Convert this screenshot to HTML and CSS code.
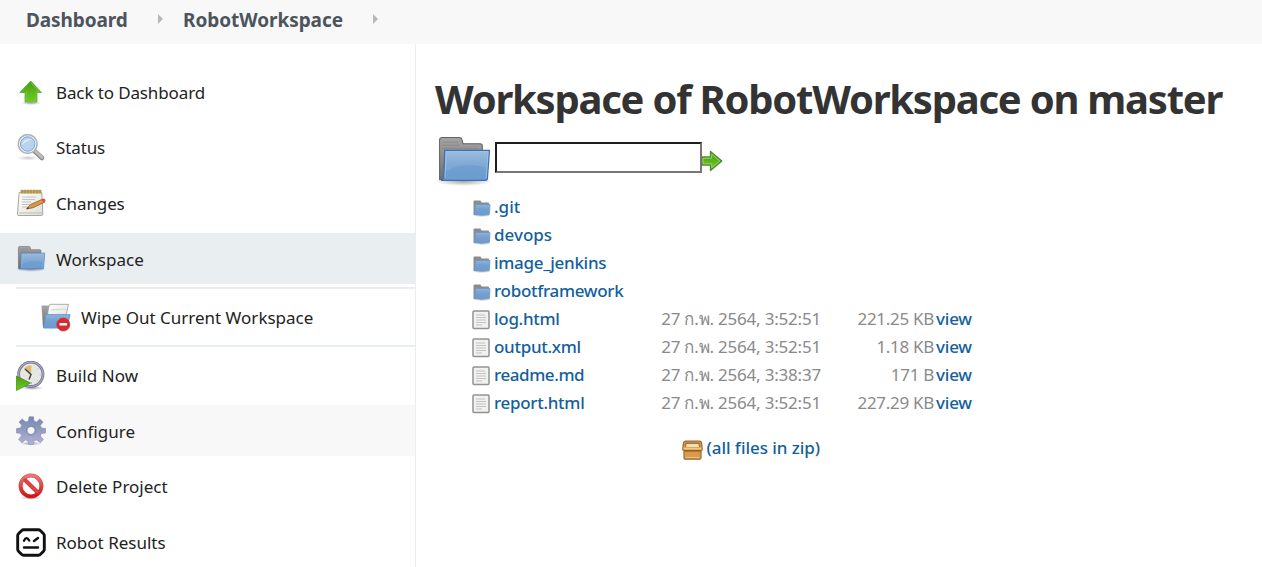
FILE: index.html
```html
<!DOCTYPE html>
<html lang="en">
<head>
<meta charset="utf-8">
<title>Workspace of RobotWorkspace on master</title>
<link rel="stylesheet" href="styles.css">
</head>
<body>
<svg class="defs" width="0" height="0" aria-hidden="true">
  <defs>
    <linearGradient id="blue" x1="0" y1="0" x2="0" y2="1"><stop offset="0" stop-color="#8fb4dc"/><stop offset=".5" stop-color="#729fcf"/><stop offset="1" stop-color="#6b9bd2"/></linearGradient>
    <linearGradient id="grey" x1="0" y1="0" x2="0" y2="1"><stop offset="0" stop-color="#a5a5a5"/><stop offset="1" stop-color="#6e6e6e"/></linearGradient>
    <linearGradient id="green" x1="0" y1="0" x2="0" y2="1"><stop offset="0" stop-color="#4a9a17"/><stop offset="1" stop-color="#6fce1c"/></linearGradient>
    <linearGradient id="paper" x1="0" y1="0" x2="1" y2="1"><stop offset="0" stop-color="#fff"/><stop offset="1" stop-color="#deded9"/></linearGradient>
    <linearGradient id="red" x1="0" y1="0" x2="0" y2="1"><stop offset="0" stop-color="#e87878"/><stop offset="1" stop-color="#cc1515"/></linearGradient>
    <linearGradient id="gear" x1="0" y1="0" x2="0" y2="1"><stop offset="0" stop-color="#7488ae"/><stop offset="1" stop-color="#b3b2d6"/></linearGradient>
    <radialGradient id="shade"><stop offset="0" stop-color="#000" stop-opacity=".35"/><stop offset="1" stop-color="#000" stop-opacity="0"/></radialGradient>
    <symbol id="folder" viewBox="0 0 56 50">
      <ellipse cx="28" cy="45.500" rx="28" ry="4.500" fill="url(#shade)"/>
      <path d="M4.500 44V5q0-2.500 2.500-2.500h17q2 0 2.500 2l1 4h17q2 0 2 2V42z" fill="url(#grey)" stroke="#626262"/>
      <path d="M7 7h16M7 10h17M7 13h36" stroke="#858585" stroke-width=".8"/>
      <path d="M9.500 15h44L51.500 43q-.2 1.500-2 1.500H6q2.500-1 2.700-3z" fill="url(#blue)" stroke="#3c70b2" stroke-width="1.200"/>
      <path d="M11 16.300h41L50.500 32Q28 26 9.500 36z" fill="#fff" opacity=".1"/>
      <path d="M9.800 42l1.300-25.700h41L50.200 42.500" fill="none" stroke="#a5c5ea" stroke-width=".8"/>
    </symbol>
    <symbol id="mini-folder" viewBox="0 0 20 18">
      <ellipse cx="10" cy="16.500" rx="9" ry="1.500" fill="url(#shade)"/>
      <path d="M1.500 16V2.500q0-1 1-1H8.500l1 2H16q1 0 1 1V15z" fill="#8c8c8c"/>
      <path d="M3.500 5.500H18L17.500 15q0 .8-1 .8H2.500z" fill="url(#blue)" stroke="#6594cb" stroke-width=".7"/>
    </symbol>
    <symbol id="file" viewBox="0 0 18 20">
      <rect x="1" y="1" width="16" height="17.500" rx="1" fill="#f1f1f0" stroke="#929292" stroke-width="1.500"/>
      <path d="M4 5h9M4 7.500h10M4 10h10M4 12.500h10M4 15h6" stroke="#c2c2c2"/>
    </symbol>
  </defs>
</svg>
<header class="breadcrumbs">
  <a class="crumb crumb-home">Dashboard</a><i class="sep"></i><a class="crumb crumb-job">RobotWorkspace</a><i class="sep sep-last"></i>
</header>
<div class="page">
  <nav class="side">
    <a class="task"><svg class="icon" viewBox="0 0 30 30"><ellipse cx="15" cy="25" rx="10" ry="2" fill="url(#shade)"/><path d="M14.700 3L25.500 14.500H21v9.500H9v-9.500H3.800z" fill="url(#green)" stroke="#57a834" stroke-width=".8"/><path d="M14.700 4.500l8.500 9.200H20V23h-9.800v-9.300" fill="none" stroke="#7fcb50" stroke-width=".7"/></svg><span class="t-tight">Back to Dashboard</span></a>
    <a class="task"><svg class="icon" viewBox="0 0 30 30"><ellipse cx="12" cy="25" rx="11" ry="2.500" fill="url(#shade)" opacity=".6"/><path d="M19 18.500l7 6.500" stroke="#8a8a8a" stroke-width="4.500" stroke-linecap="round"/><path d="M19 18l7 6.500" stroke="#bcbcbc" stroke-width="2.800" stroke-linecap="round"/><circle cx="11.700" cy="11" r="9.300" fill="#b9d2ef" stroke="#b0b3b6" stroke-width="1.800"/><circle cx="11.700" cy="11" r="8" fill="none" stroke="#f5f7fa" stroke-width="1.200"/><circle cx="11.700" cy="11" r="7.200" fill="none" stroke="#7fa8d6"/><path d="M6 12q1-7 10-6-5 2-10 6z" fill="#fff" opacity=".5"/></svg><span class="t-tight">Status</span></a>
    <a class="task changes"><svg class="icon" viewBox="0 0 30 30"><path d="M3.200 3.500h22.600l1.100 21.500q0 1.500-1.500 1.500H3.100Q1.500 26.500 1.500 25z" fill="url(#paper)" stroke="#a7a79e"/><path d="M4.500 1h21V4.500h-21z" fill="#bda65a"/><path d="M6 .5v4M9 .5v4M12 .5v4M15 .5v4M18 .5v4M21 .5v4M24 .5v4" stroke="#a08f45"/><path d="M6 8h14M6 10.500h13M6 13h9M6 15.500h8M6 18h6" stroke="#c4c4c4"/><path d="M3 24h23" stroke="#bcbcb7"/><path d="M10.500 20l4-4.500L27 10l2 3-12 5.700z" fill="#d99a45" stroke="#955c22" stroke-width=".8"/><path d="M25.500 10.500l2.200-1q1.600 0 2 2l-2.500 1.800z" fill="#d9534b"/><path d="M10.500 20l1.700-2 1.100 1.200z" fill="#333"/></svg><span class="t-tight">Changes</span></a>
    <a class="task active"><svg class="folder-icon"><use href="#folder"/></svg><span class="t-low">Workspace</span></a>
    <div class="subtasks">
      <a class="subtask"><svg class="icon" viewBox="0 0 30 30"><path d="M.5 3.500q0-1 1-1H8l2 2v20H2z" fill="url(#grey)"/><path d="M5 23L7.500 4.500 9 1.300h18.500L25 13H5z" fill="url(#paper)" stroke="#999" stroke-width=".8"/><path d="M10 7l15-1" stroke="#d2d2ce"/><path d="M5 11.700h24L26 25H2.500z" fill="url(#blue)" stroke="#6897cd"/><circle cx="22.300" cy="21.500" r="6.500" fill="#db2a2e" stroke="#c2353a" stroke-width=".8"/><path d="M18.500 21.300h7.600" stroke="#fff" stroke-width="2.400"/></svg><span>Wipe Out Current Workspace</span></a>
    </div>
    <a class="task build"><svg class="icon" viewBox="0 0 30 30"><ellipse cx="16" cy="27" rx="12" ry="2" fill="url(#shade)"/><circle cx="14.800" cy="13.300" r="12.200" fill="#e6e6e2" stroke="#757592" stroke-width="2.800"/><circle cx="14.800" cy="13.300" r="12.200" fill="none" stroke="#a9a9c6" stroke-width="1.200"/><path d="M15 13.500L8 7.500Q10.500 4.500 15.500 4.500z" fill="#dfbb68"/><path d="M9 8l6 5.500-2 5" fill="none" stroke="#444" stroke-width="1.500"/><path d="M23.500 14H25M15.500 21v2M22 7.500l-1 1M22 20l-1-1" stroke="#bbb"/><path d="M.5 15l14 7L.5 29.500z" fill="url(#green)" stroke="#46951f" stroke-width=".8"/></svg><span class="t-wide">Build Now</span></a>
    <a class="task hover"><svg class="icon" viewBox="0 0 30 30"><ellipse cx="15" cy="27.500" rx="11" ry="2" fill="url(#shade)"/><path fill="url(#gear)" fill-rule="evenodd" stroke="#8a92b8" stroke-width=".7" d="M12.500 5L13 .8h4.500L18 5l2.500 1 3.300-3 3.300 3-2.800 3.500 1.200 2.500 4 .5V17l-4.200.5-1 2.500 3 3.500-3 3.200-3.500-2.800-3 1.200-.7 3.400h-4.300l-.8-3.500-2.700-1.200L6 26.700 2.700 23.500l2.800-3.700-1-2.500L.5 17v-4.500l4-.5 1.200-2.800L3 6l3.200-3L9.700 6zM15 10.500a4 4 0 1 0 0 8 4 4 0 0 0 0-8z"/><circle cx="15" cy="14.500" r="4.500" fill="none" stroke="#7e86b2"/></svg><span class="t-low">Configure</span></a>
    <a class="task delete"><svg class="icon" viewBox="0 0 30 30"><ellipse cx="15" cy="25.800" rx="11" ry="2" fill="url(#shade)"/><circle cx="15" cy="14" r="10.400" fill="#fff" stroke="#cf4a4a" stroke-width="4"/><path d="M8 7l14 13.700" stroke="#c83232" stroke-width="4"/><circle cx="15" cy="14" r="10.400" fill="none" stroke="url(#red)" stroke-width="3"/><path d="M8 7l14 13.700" stroke="#dd4545" stroke-width="3"/></svg><span>Delete Project</span></a>
    <a class="task robot"><svg class="icon" viewBox="0 0 30 30" fill="none" stroke="#111"><path d="M7.500 1.700h15q1 0 2 1L27.300 5.500q1 1 1 2v14q0 1-1 2l-2.800 2.800q-1 1-2 1h-15q-1 0-2-1l-2.800-2.800q-1-1-1-2v-14q0-1 1-2l2.800-2.800q1-1 2-1z" stroke-width="2.900" stroke-linejoin="round"/><path d="M8 12.700q2.500-5 5.200-.2M18 13l4-3M8 19.500h14" stroke-width="2.400" stroke-linecap="round"/></svg><span>Robot Results</span></a>
  </nav>
  <main class="main">
    <h1>Workspace of RobotWorkspace on master</h1>
    <form class="path">
      <svg class="big-folder"><use href="#folder"/></svg>
      <input class="path-input" type="text" aria-label="Path">
      <svg class="go" viewBox="0 0 21 22"><path d="M0 7h8.500V1.500L19.800 11 8.500 20.500V15H0z" fill="#62b51e" stroke="#4b8a32" stroke-width="1.300" stroke-linejoin="round"/><path d="M1 8.200h8.700V4.200L17.800 11 9.700 17.800v-4H1z" fill="url(#green)" stroke="#9ad36e"/></svg>
    </form>
    <div class="files">
      <div class="row"><svg class="dir"><use href="#mini-folder"/></svg><a class="name n-short">.git</a></div>
      <div class="row"><svg class="dir"><use href="#mini-folder"/></svg><a class="name n-short">devops</a></div>
      <div class="row"><svg class="dir"><use href="#mini-folder"/></svg><a class="name">image_jenkins</a></div>
      <div class="row"><svg class="dir"><use href="#mini-folder"/></svg><a class="name">robotframework</a></div>
      <div class="row"><svg class="doc"><use href="#file"/></svg><a class="name">log.html</a><span class="date">27 ก.พ. 2564, 3:52:51</span><span class="size">221.25 KB</span><a class="view">view</a></div>
      <div class="row"><svg class="doc"><use href="#file"/></svg><a class="name">output.xml</a><span class="date">27 ก.พ. 2564, 3:52:51</span><span class="size">1.18 KB</span><a class="view">view</a></div>
      <div class="row"><svg class="doc"><use href="#file"/></svg><a class="name n-readme">readme.md</a><span class="date">27 ก.พ. 2564, 3:38:37</span><span class="size">171 B</span><a class="view">view</a></div>
      <div class="row"><svg class="doc"><use href="#file"/></svg><a class="name">report.html</a><span class="date">27 ก.พ. 2564, 3:52:51</span><span class="size">227.29 KB</span><a class="view">view</a></div>
    </div>
    <div class="zip">
      <svg class="box" viewBox="0 0 21 20"><path d="M3.500 1.200h14q1.500 0 2 1.500l.7 5.300v2H19v8q0 1.200-1.200 1.200H3.200Q2 19.200 2 18v-8H.800V8l.7-5.300q.5-1.500 2-1.500z" fill="#d99b4b" stroke="#9a6a30" stroke-width="1.200"/><path d="M3.500 2.500h14l1 5h-16z" fill="#a8743a"/><path d="M4.500 4h12l.5 3H4z" fill="#f2dfb5"/><path d="M1.500 7.500h18v2h-18z" fill="#f0c988"/><path d="M2 10.800h17" stroke="#8f5c24" stroke-width="1.500"/><path d="M3.500 17.500h14" stroke="#edc27c"/></svg>
      <a class="all">(all files in zip)</a>
    </div>
  </main>
</div>
</body>
</html>
```

FILE: styles.css
```css
* { box-sizing: border-box; }
body {
  margin: 0;
  height: 567px;
  overflow: hidden;
  background: #fff;
  color: #333;
  font: 500 17px/24px "Noto Sans", "Open Sans", sans-serif;
}
a { color: #135f9c; white-space: nowrap; }
svg { display: block; flex: none; }
.defs { position: absolute; }

.breadcrumbs {
  display: flex;
  height: 44px;
  padding: 8px 0 0 26px;
  background: #f8f8f8;
}
.crumb { color: #4d545d; font-weight: 700; font-size: 19px; }
.crumb-home { width: 132px; letter-spacing: -.1px; }
.crumb-job { width: 174px; letter-spacing: -.05px; }
.sep {
  width: 0;
  height: 10px;
  margin: 6px 20px 0 0;
  border: solid transparent;
  border-width: 5px 0 5px 5px;
  border-left-color: #b8b8b8;
}
.sep-last { margin-left: 16px; }

.page { display: flex; height: 523px; }
.side {
  flex: none;
  width: 416px;
  padding-top: 23px;
  border-right: 1px solid #eaeef0;
  font-weight: 400;
}
.task {
  display: flex;
  align-items: center;
  gap: 10px;
  height: 51px;
  margin-bottom: 4px;
  padding-left: 16px;
  color: #222;
}
.icon { width: 30px; height: 30px; }
.folder-icon { width: 30px; height: 27px; }
.t-tight { letter-spacing: -.12px; }
.t-wide { letter-spacing: .1px; }
.t-low { padding-top: 2px; }
.changes { margin-top: 5px; }
.active { margin-bottom: 3px; background: #e9eef1; }
.hover { margin-bottom: 5px; background: #f8f8f8; }
.delete { margin-bottom: 5px; }
.subtasks {
  height: 60px;
  margin: 0 0 3px 16px;
  border: solid #e9eef1;
  border-width: 2px 0;
}
.subtask { display: flex; align-items: center; gap: 10px; height: 57px; padding-left: 25px; color: #222; }

.main { padding: 31px 0 0 19px; }
h1 {
  margin: 0;
  font-size: 40px;
  line-height: 48px;
  font-weight: 700;
  letter-spacing: -1.24px;
  white-space: nowrap;
}
.path { display: flex; margin: 12px 0 0; height: 54px; }
.big-folder { width: 57px; height: 51px; margin-right: 3px; }
.path-input {
  width: 207px;
  height: 31px;
  margin-top: 7px;
  padding: 0;
  border: 2px solid;
  border-color: #1e1e1e #767676 #767676 #1e1e1e;
  background: #fff;
}
.go { width: 21px; height: 22px; margin-top: 15px; }
.files { margin: 4px 0 0 37px; }
.row { display: flex; align-items: center; height: 28px; }
.dir { width: 20px; height: 18px; margin: 2px 2px 0 0; }
.doc { width: 18px; height: 20px; margin: 1px 4px 0 0; }
.name { width: 166px; letter-spacing: -.3px; }
.n-short { letter-spacing: 0; }
.n-readme { letter-spacing: -.42px; }
.date, .size { color: #8a8a8a; font-weight: 400; text-align: right; white-space: nowrap; letter-spacing: -.2px; }
.date { width: 161px; }
.size { width: 113px; letter-spacing: -.3px; }
.view { padding-left: 2px; letter-spacing: -.2px; }
.zip { display: flex; align-items: center; width: 385px; height: 28px; margin-top: 17px; justify-content: flex-end; gap: 4px; }
.all { letter-spacing: -.06px; }
.box { width: 21px; height: 20px; margin-top: 3px; }
```
